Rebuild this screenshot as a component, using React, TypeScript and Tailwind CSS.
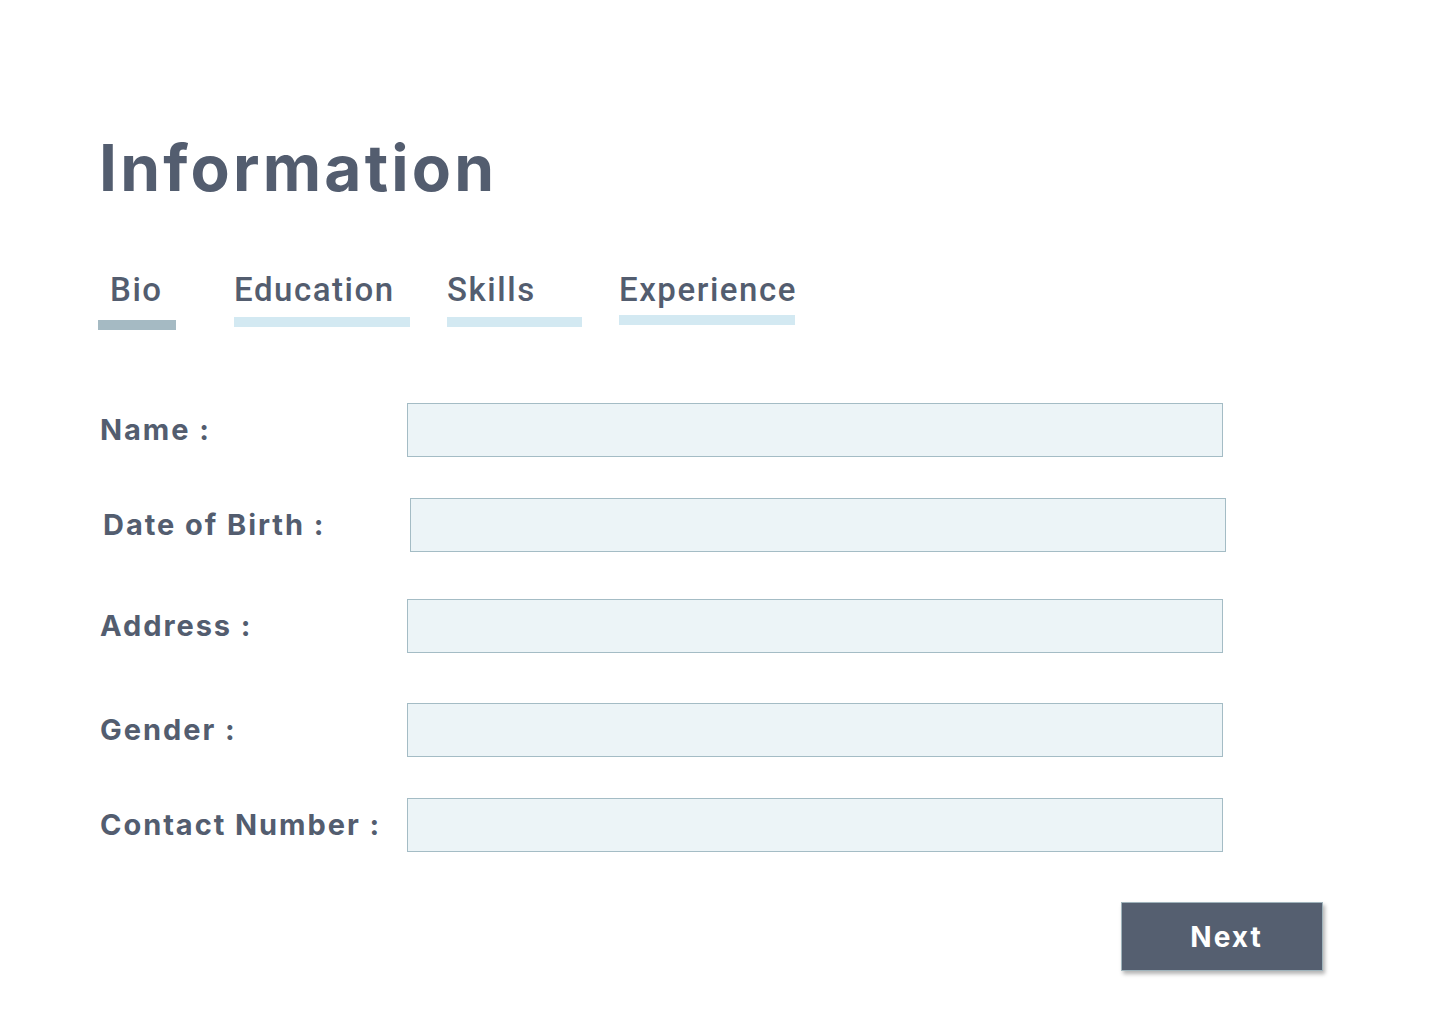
const tabs = [
  { label: 'Bio', wrap: 'w-[78px]', text: 'pl-[12px]', bar: 'mt-[14px] bg-[#a5bac3]', gap: 'ml-[98px]' },
  { label: 'Education', wrap: 'w-[176px]', text: '', bar: 'mt-[11px] bg-[#d3e9f2]', gap: 'ml-[58px]' },
  { label: 'Skills', wrap: 'w-[135px]', text: '', bar: 'mt-[11px] bg-[#d3e9f2]', gap: 'ml-[37px]' },
  { label: 'Experience', wrap: 'w-[176px]', text: '', bar: 'mt-[9px] bg-[#d3e9f2]', gap: 'ml-[37px]' },
];

// spacing between rows isn't uniform in the mock, so each row carries its own top margin
const fields = [
  { label: 'Name :', row: 'mt-[73px]' },
  { label: 'Date of Birth :', row: 'mt-[41px] ml-[3px]' },
  { label: 'Address :', row: 'mt-[47px]' },
  { label: 'Gender :', row: 'mt-[50px]' },
  { label: 'Contact Number :', row: 'mt-[41px]' },
];

export default function App() {
  return (
    <div className="min-h-[1024px] w-[1440px] bg-white text-[#535d6f]">
      <h1 className="ml-[99px] pt-[136px] font-['Inter',sans-serif] text-[64px] font-bold leading-none tracking-[3.2px]">
        Information
      </h1>

      <div className="mt-[73px] flex items-start">
        {tabs.map((tab) => (
          <div key={tab.label} className={`${tab.gap} ${tab.wrap} flex flex-col`}>
            <span
              className={`${tab.text} font-['Roboto',sans-serif] text-[33px] font-medium leading-none tracking-[1.55px]`}
            >
              {tab.label}
            </span>
            <span className={`${tab.bar} h-[10px] w-full`} />
          </div>
        ))}
      </div>

      <form className="w-[1323px] pl-[100px]" onSubmit={(e) => e.preventDefault()}>
        {fields.map((field) => (
          <div key={field.label} className={`${field.row} flex items-center`}>
            <label className="w-[307px] font-['Inter',sans-serif] text-[29px] font-bold tracking-[1.95px]">
              {field.label}
            </label>
            <input
              type="text"
              className="h-[54px] w-[816px] border border-[#a4bcc5] bg-[#ecf4f7] outline-none"
            />
          </div>
        ))}

        <div className="mt-[50px] flex justify-end">
          <button
            type="submit"
            className="h-[69px] w-[202px] border border-[#9fb3bb] bg-[#555f70] pl-[9px] font-['Inter',sans-serif] text-[28px] font-bold tracking-[2px] text-white shadow-[2px_3px_4px_rgba(0,0,0,0.3)]"
          >
            Next
          </button>
        </div>
      </form>
    </div>
  );
}
